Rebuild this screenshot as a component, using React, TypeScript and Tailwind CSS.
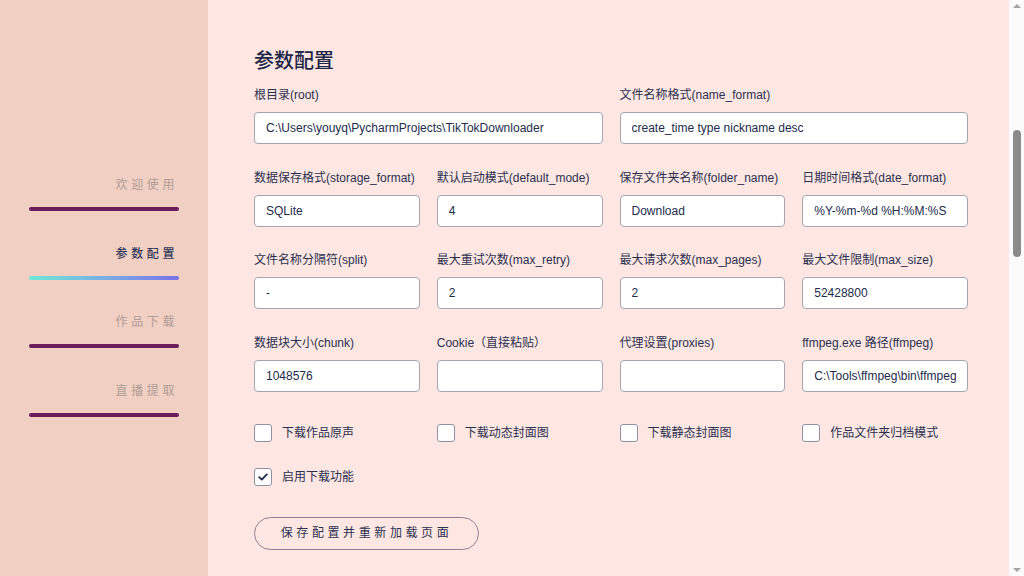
import { useEffect, useRef } from 'react'

const font = 'font-["Liberation_Sans","Noto_Sans_CJK_SC",sans-serif]'

const navItems = [
  { label: '欢迎使用', active: false },
  { label: '参数配置', active: true },
  { label: '作品下载', active: false },
  { label: '直播提取', active: false },
]

type Field = { label: string; value: string; wide?: boolean }

const rows: Field[][] = [
  [
    { label: '根目录(root)', value: 'C:\\Users\\youyq\\PycharmProjects\\TikTokDownloader', wide: true },
    { label: '文件名称格式(name_format)', value: 'create_time type nickname desc', wide: true },
  ],
  [
    { label: '数据保存格式(storage_format)', value: 'SQLite' },
    { label: '默认启动模式(default_mode)', value: '4' },
    { label: '保存文件夹名称(folder_name)', value: 'Download' },
    { label: '日期时间格式(date_format)', value: '%Y-%m-%d %H:%M:%S' },
  ],
  [
    { label: '文件名称分隔符(split)', value: '-' },
    { label: '最大重试次数(max_retry)', value: '2' },
    { label: '最大请求次数(max_pages)', value: '2' },
    { label: '最大文件限制(max_size)', value: '52428800' },
  ],
  [
    { label: '数据块大小(chunk)', value: '1048576' },
    { label: 'Cookie（直接粘贴）', value: '' },
    { label: '代理设置(proxies)', value: '' },
    { label: 'ffmpeg.exe 路径(ffmpeg)', value: 'C:\\Tools\\ffmpeg\\bin\\ffmpeg.exe' },
  ],
]

const checks = [
  { label: '下载作品原声', checked: false },
  { label: '下载动态封面图', checked: false },
  { label: '下载静态封面图', checked: false },
  { label: '作品文件夹归档模式', checked: false },
  { label: '启用下载功能', checked: true },
]

function Input({ f }: { f: Field }) {
  return (
    <div className={f.wide ? 'col-span-2 flex flex-col' : 'flex flex-col'}>
      <label className="mb-[9px] whitespace-nowrap text-[12px] leading-[16px] text-[#2a3150]">{f.label}</label>
      <input
        readOnly
        value={f.value}
        className={`${font} h-[32px] w-full min-w-0 rounded-[4px] border border-[#a3a5b3] bg-white px-[11px] text-[12px] text-[#232b4b] outline-none`}
      />
    </div>
  )
}

function Check({ label, checked }: { label: string; checked: boolean }) {
  return (
    <div className="flex items-center gap-[10px]">
      <span className="flex h-[18px] w-[18px] items-center justify-center rounded-[3px] border border-[#8e91a3] bg-white">
        {checked && (
          <svg width="10" height="8" viewBox="0 0 10 8" fill="none">
            <path d="M1.2 4.2 L3.8 6.6 L8.8 1.4" stroke="#1f2a4d" strokeWidth="1.8" strokeLinecap="round" strokeLinejoin="round" />
          </svg>
        )}
      </span>
      <span className="text-[12px] text-[#2a3150]">{label}</span>
    </div>
  )
}

// stand-in for the window's classic scrollbar
function ScrollBar() {
  return (
    <div className="flex w-[15px] shrink-0 flex-col items-center bg-[#fcfbfb]">
      <div className="mt-[4px] h-0 w-0 border-x-[4px] border-b-[4px] border-x-transparent border-b-[#a3a3a3]" />
      <div className="mt-[122px] h-[127px] w-[8px] rounded-full bg-[#8b8b8b]" />
      <div className="flex-1" />
      <div className="mb-[4px] h-0 w-0 border-x-[4px] border-t-[4px] border-x-transparent border-t-[#a3a3a3]" />
    </div>
  )
}

export default function App() {
  const scroller = useRef<HTMLDivElement>(null)
  const settings = useRef<HTMLElement>(null)

  useEffect(() => {
    if (scroller.current && settings.current) {
      scroller.current.scrollTop = settings.current.offsetTop
    }
  }, [])

  return (
    <div className={`${font} flex h-screen w-full overflow-hidden bg-[#fee6e2]`}>
      <aside className="flex w-[208px] shrink-0 flex-col bg-[#f1cfc2] pt-[176px]">
        {navItems.map(item => (
          <div key={item.label} className="mb-[33.5px] flex flex-col items-end px-[29px]">
            <span
              className={
                'mr-[1px] text-[12px] leading-[18px] tracking-[0.3em] ' +
                (item.active ? 'font-medium text-[#353a5b]' : 'text-[#b09d98]')
              }
            >
              {item.label}
            </span>
            <div
              className={
                'mt-[13px] h-[4px] w-full rounded-full ' +
                (item.active ? 'bg-gradient-to-r from-[#6eead6] to-[#7a6fea]' : 'bg-[#6b1d5b]')
              }
            />
          </div>
        ))}
      </aside>

      <div ref={scroller} className="flex-1 overflow-y-scroll [scrollbar-width:none]">
        <section className="h-[521px]" />
        <section ref={settings} className="h-[576px] pl-[46px] pr-[41px] pt-[49px]">
          <h1 className="mb-[14px] text-[20px] leading-[24px] font-medium text-[#1d2647]">参数配置</h1>
          <div className="grid grid-cols-4 gap-x-[17px] gap-y-[25.5px]">
            {rows.flat().map(f => (
              <Input key={f.label} f={f} />
            ))}
          </div>
          <div className="mt-[32px] grid grid-cols-4 gap-x-[17px] gap-y-[26px]">
            {checks.map(c => (
              <Check key={c.label} label={c.label} checked={c.checked} />
            ))}
          </div>
          <button className="mt-[31px] h-[33px] w-[225px] rounded-full border border-[#8d8196] text-[12px] tracking-[0.3em] text-[#2a3150]">
            保存配置并重新加载页面
          </button>
        </section>
        <section className="h-[690px]" />
        <section className="h-[690px]" />
      </div>
      <ScrollBar />
    </div>
  )
}
